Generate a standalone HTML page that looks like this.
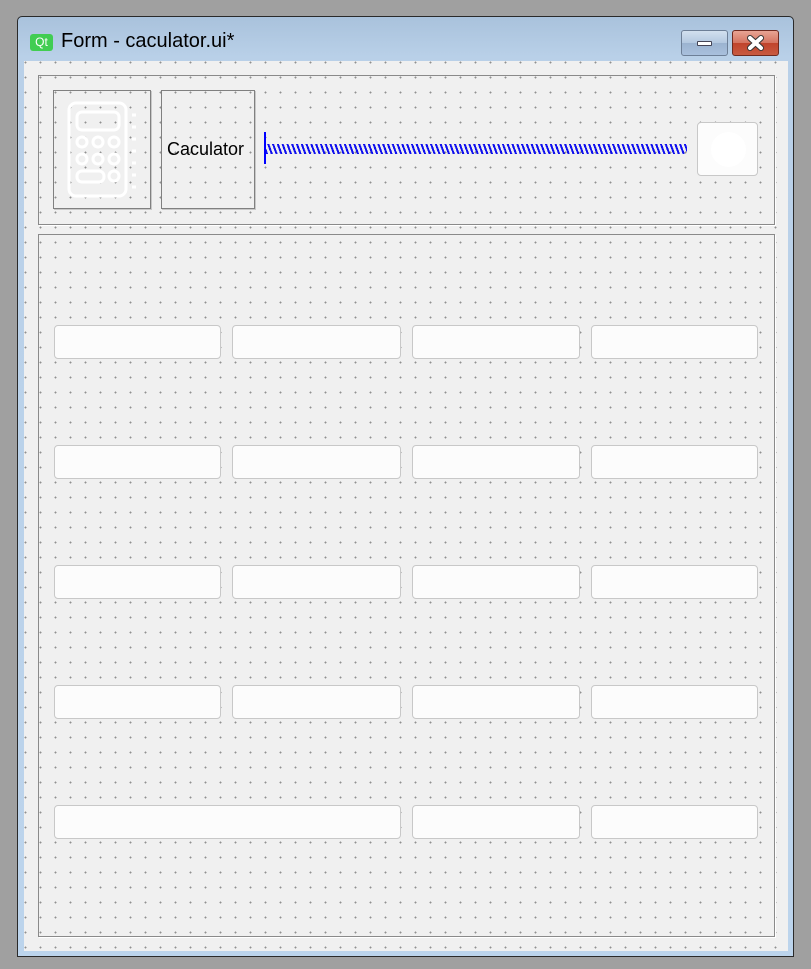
<!DOCTYPE html>
<html><head><meta charset="utf-8"><style>
html,body{margin:0;padding:0;width:811px;height:969px;background:#a0a0a0;overflow:hidden;font-family:"Liberation Sans",sans-serif}
.win{position:absolute;left:17px;top:16px;width:777px;height:941px;background:linear-gradient(#a9c2dc 0px,#b9d0e8 40px,#bcd4ec 100%);border:1px solid #2a2a2a;box-sizing:border-box;border-radius:5px 5px 0 0}
.content{position:absolute;left:24px;top:61px;width:764px;height:890px;background-color:#f0f0f0}
.dots{position:absolute;left:24px;top:61px;width:764px;height:890px;
background-image:radial-gradient(circle at 1.5px 1.5px,#909090 0.8px,transparent 1.1px);background-size:15px 15px;background-position:0px 0px}
.qt{position:absolute;left:30px;top:34px;width:23px;height:17px;background:#41cd52;border-radius:3px;color:#fff;font-size:12px;line-height:17px;text-align:center}
.title{position:absolute;left:61px;top:30px;font-size:20px;color:#000}
.btnmin{position:absolute;left:681px;top:30px;width:47px;height:26px;border:1px solid #6d7f97;border-radius:3px;box-sizing:border-box;background:linear-gradient(#d2e0ef,#b3c8e0 50%,#9bb3d0 51%,#a9c0dd)}
.btnclose{position:absolute;left:732px;top:30px;width:47px;height:26px;border:1px solid #6e2a20;border-radius:3px;box-sizing:border-box;background:linear-gradient(#e8a494,#d47360 50%,#c0432c 51%,#c85a40)}
.frame{position:absolute;border:1px solid #8a8a8a;box-sizing:border-box;box-shadow:1px 1px 0 #fff}
.box{position:absolute;border:1px solid #808080;box-sizing:border-box;box-shadow:1px 1px 0 #c8c8c8}
.b{position:absolute;height:34px;background:#fcfcfc;border:1px solid #c8c8c8;border-radius:4px;box-sizing:border-box}
</style></head><body>
<div class="win"></div>
<div class="qt">Qt</div>
<div class="title">Form - caculator.ui*</div>
<div class="btnmin"><div style="position:absolute;left:15px;top:10px;width:15px;height:5px;background:#fff;border:1px solid #445;box-sizing:border-box;border-radius:1px"></div></div>
<div class="btnclose"><svg width="47" height="26" style="position:absolute;left:-1px;top:-1px"><path d="M18 8 L29 18 M29 8 L18 18" stroke="#333" stroke-width="6" stroke-linecap="round"/><path d="M18 8 L29 18 M29 8 L18 18" stroke="#fff" stroke-width="4" stroke-linecap="round"/></svg></div>
<div class="content"></div>
<div class="dots"></div>
<div class="frame" style="left:38px;top:75px;width:737px;height:150px"></div>
<div class="frame" style="left:38px;top:234px;width:737px;height:703px"></div>
<div class="box" style="left:53px;top:90px;width:98px;height:119px">
<svg width="98" height="119" style="position:absolute;left:-1px;top:-1px" fill="none" stroke="#fff" stroke-width="3">
<rect x="16" y="13" width="57" height="93" rx="7"/>
<rect x="24" y="22" width="42" height="18" rx="5"/>
<circle cx="29" cy="52" r="5"/><circle cx="45" cy="52" r="5"/><circle cx="61" cy="52" r="5"/>
<circle cx="29" cy="69" r="5"/><circle cx="45" cy="69" r="5"/><circle cx="61" cy="69" r="5"/>
<rect x="24" y="81" width="27" height="11" rx="5"/><circle cx="61" cy="86" r="5"/>
<path d="M79 25h4M79 37h4M79 49h4M79 61h4M79 73h4M79 85h4M79 97h4"/>
</svg></div>
<div class="box" style="left:161px;top:90px;width:94px;height:119px"><div style="position:absolute;left:5px;top:48px;font-size:18px">Caculator</div></div>
<div style="position:absolute;left:264px;top:132px;width:2px;height:32px;background:#00f"></div>
<div style="position:absolute;left:266px;top:144px;width:421px;height:10px;background:repeating-linear-gradient(70deg,#1010ee 0 2px,transparent 2px 4.5px)"></div>
<div class="b" style="left:697px;top:122px;width:61px;height:54px"><div style="position:absolute;left:13px;top:9px;width:35px;height:35px;border-radius:50%;background:#fff"></div></div>
<div class="b" style="left:54px;top:325px;width:167px"></div><div class="b" style="left:232px;top:325px;width:169px"></div><div class="b" style="left:412px;top:325px;width:168px"></div><div class="b" style="left:591px;top:325px;width:167px"></div>
<div class="b" style="left:54px;top:445px;width:167px"></div><div class="b" style="left:232px;top:445px;width:169px"></div><div class="b" style="left:412px;top:445px;width:168px"></div><div class="b" style="left:591px;top:445px;width:167px"></div>
<div class="b" style="left:54px;top:565px;width:167px"></div><div class="b" style="left:232px;top:565px;width:169px"></div><div class="b" style="left:412px;top:565px;width:168px"></div><div class="b" style="left:591px;top:565px;width:167px"></div>
<div class="b" style="left:54px;top:685px;width:167px"></div><div class="b" style="left:232px;top:685px;width:169px"></div><div class="b" style="left:412px;top:685px;width:168px"></div><div class="b" style="left:591px;top:685px;width:167px"></div>
<div class="b" style="left:54px;top:805px;width:347px"></div><div class="b" style="left:412px;top:805px;width:168px"></div><div class="b" style="left:591px;top:805px;width:167px"></div>
</body></html>
